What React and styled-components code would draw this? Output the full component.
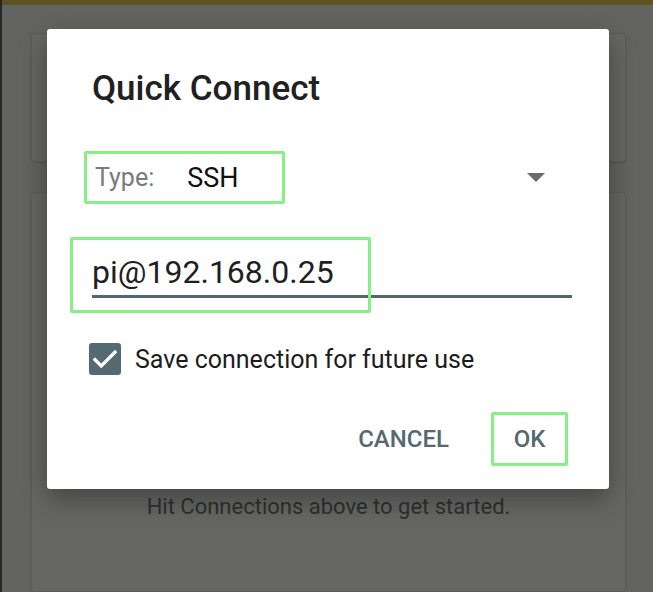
import styled, { createGlobalStyle } from "styled-components"

const GlobalStyle = createGlobalStyle`
  html, body {
    margin: 0;
    padding: 0;
    background: #636462;
  }
  body {
    font-family: Roboto, "Noto Sans", "Liberation Sans", sans-serif;
  }
`

const Screen = styled.div`
  position: relative;
  width: 653px;
  height: 592px;
  overflow: hidden;
  display: flex;
  flex-direction: column;
  background: #636462;
  border-left: 2px solid #262626;
  box-sizing: border-box;
`

const TopBar = styled.div`
  height: 5px;
  flex: none;
  background: #5d5222;
`

const Content = styled.div`
  flex: 1;
  display: flex;
  flex-direction: column;
  gap: 30px;
  padding: 28px 27px 0 29px;
  min-height: 0;
`

const Card = styled.div`
  background: #666765;
  border: 1px solid #5b5c5a;
  border-radius: 3px;
  box-shadow: 0 1px 2px rgba(0, 0, 0, 0.12);
  height: ${(p) => p.$height || "auto"};
  flex: ${(p) => (p.$grow ? "1" : "none")};
  text-align: center;
`

const HintText = styled.p`
  margin: 0;
  padding-top: 301px;
  font-size: 22px;
  line-height: 26px;
  color: #2e302f;
`

const Dialog = styled.div`
  position: absolute;
  left: 45px;
  top: 29px;
  width: 562px;
  height: 460px;
  box-sizing: border-box;
  background: #ffffff;
  border-radius: 3px;
  box-shadow: 0 10px 28px rgba(0, 0, 0, 0.35);
  padding: 42px 37px 23px 45px;
  display: flex;
  flex-direction: column;
`

const Title = styled.h2`
  margin: 0;
  font-size: 35px;
  line-height: 35px;
  font-weight: 500;
  color: #212121;
`

const SpinnerRow = styled.div`
  margin-top: 45px;
  display: flex;
  align-items: center;
  justify-content: space-between;
  height: 53px;
`

const Highlight = styled.div`
  border: 3px solid #86ef86;
  border-radius: 2px;
  box-sizing: border-box;
`

const TypeBox = styled(Highlight)`
  margin-left: -8px;
  width: 201px;
  height: 53px;
  display: flex;
  align-items: center;
  gap: 33px;
  padding-left: 8px;
`

const TypeLabel = styled.span`
  font-size: 25px;
  color: #7a7a7a;
`

const TypeValue = styled.span`
  font-size: 27px;
  color: #111111;
`

const Arrow = styled.span`
  width: 0;
  height: 0;
  margin-right: 27px;
  border-left: 9px solid transparent;
  border-right: 9px solid transparent;
  border-top: 9px solid #6b6b6b;
`

const Field = styled.div`
  position: relative;
  margin-top: 49px;
  padding-bottom: 4px;
  border-bottom: 3px solid #4f6871;
  font-size: 32px;
  line-height: 38px;
  color: #1f1f1f;
`

const FieldHighlight = styled(Highlight)`
  position: absolute;
  left: -22px;
  top: -16px;
  width: 301px;
  height: 76px;
`

const CheckRow = styled.label`
  margin-top: 45px;
  margin-left: -3px;
  display: flex;
  align-items: center;
  gap: 14px;
  font-size: 25px;
  color: #1c1c1c;
`

const CheckBox = styled.span`
  width: 32px;
  height: 32px;
  border-radius: 3px;
  background: #546a71;
  display: flex;
  align-items: center;
  justify-content: center;
`

const Actions = styled.div`
  margin-top: auto;
  margin-right: 4px;
  display: flex;
  justify-content: flex-end;
  align-items: center;
  gap: 24px;
`

const TextButton = styled.button`
  height: 54px;
  min-width: ${(p) => (p.$outlined ? "77px" : "auto")};
  padding: 0 ${(p) => (p.$outlined ? "0" : "18px")};
  box-sizing: border-box;
  border: ${(p) => (p.$outlined ? "3px solid #86ef86" : "none")};
  border-radius: 2px;
  background: transparent;
  font-family: inherit;
  font-size: 24px;
  font-weight: 500;
  color: #55696f;
  text-transform: uppercase;
`

const CheckIcon = () => (
  <svg width="30" height="30" viewBox="0 0 24 24">
    <path d="M4 12.5l5 5L20 6.5" fill="none" stroke="#fff" strokeWidth="2.6" strokeLinecap="square" />
  </svg>
)

const App = () => {
  return (
    <>
      <GlobalStyle />
      <Screen>
        <TopBar />
        <Content>
          <Card $height="127px" />
          <Card $grow>
            <HintText>Hit Connections above to get started.</HintText>
          </Card>
        </Content>
        <Dialog>
          <Title>Quick Connect</Title>
          <SpinnerRow>
            <TypeBox>
              <TypeLabel>Type:</TypeLabel>
              <TypeValue>SSH</TypeValue>
            </TypeBox>
            <Arrow />
          </SpinnerRow>
          <Field>
            pi@192.168.0.25
            <FieldHighlight />
          </Field>
          <CheckRow>
            <CheckBox>
              <CheckIcon />
            </CheckBox>
            Save connection for future use
          </CheckRow>
          <Actions>
            <TextButton>Cancel</TextButton>
            <TextButton $outlined>OK</TextButton>
          </Actions>
        </Dialog>
      </Screen>
    </>
  )
}

export default App
